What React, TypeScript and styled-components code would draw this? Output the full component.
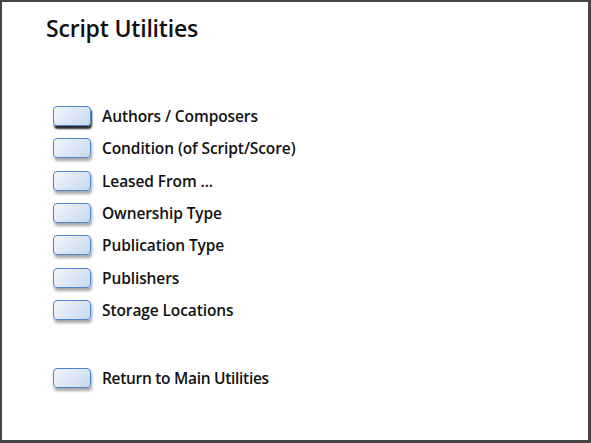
import styled, { createGlobalStyle } from "styled-components";

const GlobalStyle = createGlobalStyle`
  html, body {
    margin: 0;
    padding: 0;
    background: #ffffff;
  }
  * {
    box-sizing: border-box;
  }
`;

const Frame = styled.div`
  width: 591px;
  height: 443px;
  border-style: solid;
  border-color: #454545;
  border-width: 2px 3px 3px 2px;
  background: #ffffff;
  padding: 12px 0 0 44px;
  font-family: "Open Sans", "Noto Sans", sans-serif;
  color: #111111;
`;

const Title = styled.h1`
  margin: 0;
  font-size: 23px;
  font-weight: 600;
  line-height: 28px;
  letter-spacing: -0.2px;
`;

const Menu = styled.div`
  display: flex;
  flex-direction: column;
  margin-top: 58px;
  padding-left: 7px;
`;

const Row = styled.div<{ $gapBefore?: boolean }>`
  display: flex;
  align-items: center;
  gap: 11px;
  height: 32.3px;
  margin-top: ${(p) => (p.$gapBefore ? "36px" : "0")};
`;

const Button = styled.button<{ $focused?: boolean }>`
  width: 38px;
  height: 20px;
  padding: 0;
  border: 1px solid #4f86cf;
  border-radius: 4px;
  background: linear-gradient(135deg, #f3f6fc 0%, #dbe5f5 55%, #c8d8f0 100%);
  box-shadow: ${(p) =>
    p.$focused
      ? "1px 3px 2px rgba(0, 0, 0, 0.85)"
      : "1px 3px 3px rgba(0, 0, 0, 0.35)"};
  cursor: pointer;
`;

const Label = styled.span<{ $tight?: boolean }>`
  font-size: 15.5px;
  font-weight: 600;
  letter-spacing: ${(p) => (p.$tight ? "-0.3px" : "-0.1px")};
  color: #111111;
`;

const items = [
  "Authors / Composers",
  "Condition (of Script/Score)",
  "Leased From ...",
  "Ownership Type",
  "Publication Type",
  "Publishers",
  "Storage Locations",
];

export default function App() {
  return (
    <>
      <GlobalStyle />
      <Frame>
        <Title>Script Utilities</Title>
        <Menu>
          {items.map((item, i) => (
            <Row key={item}>
              <Button $focused={i === 0} />
              <Label>{item}</Label>
            </Row>
          ))}
          <Row $gapBefore>
            <Button />
            <Label $tight>Return to Main Utilities</Label>
          </Row>
        </Menu>
      </Frame>
    </>
  );
}
